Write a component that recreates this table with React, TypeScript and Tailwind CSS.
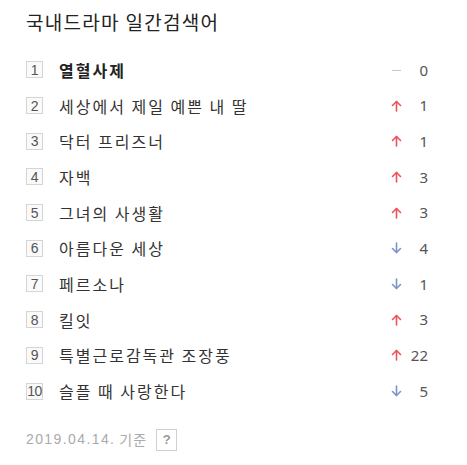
import React from "react";

type Item = { rank: number; title: string; dir: "same" | "up" | "down"; n: number; bold?: boolean };

const items: Item[] = [
  { rank: 1, title: "열혈사제", dir: "same", n: 0, bold: true },
  { rank: 2, title: "세상에서 제일 예쁜 내 딸", dir: "up", n: 1 },
  { rank: 3, title: "닥터 프리즈너", dir: "up", n: 1 },
  { rank: 4, title: "자백", dir: "up", n: 3 },
  { rank: 5, title: "그녀의 사생활", dir: "up", n: 3 },
  { rank: 6, title: "아름다운 세상", dir: "down", n: 4 },
  { rank: 7, title: "페르소나", dir: "down", n: 1 },
  { rank: 8, title: "킬잇", dir: "up", n: 3 },
  { rank: 9, title: "특별근로감독관 조장풍", dir: "up", n: 22 },
  { rank: 10, title: "슬플 때 사랑한다", dir: "down", n: 5 },
];

function Arrow({ dir }: { dir: Item["dir"] }) {
  if (dir === "same") {
    return (
      <svg width="11" height="12" viewBox="0 0 11 12">
        <line x1="1" y1="6.5" x2="10" y2="6.5" stroke="#c8c8c8" strokeWidth="1" />
      </svg>
    );
  }
  const color = dir === "up" ? "#f0505a" : "#7b93c7";
  return (
    <svg width="11" height="12" viewBox="0 0 11 12">
      {dir === "up" ? (
        <g stroke={color} strokeWidth="1.6" fill="none" strokeLinecap="round" strokeLinejoin="round">
          <line x1="5.5" y1="1.5" x2="5.5" y2="11" />
          <polyline points="1.5,5.5 5.5,1.5 9.5,5.5" />
        </g>
      ) : (
        <g stroke={color} strokeWidth="1.6" fill="none" strokeLinecap="round" strokeLinejoin="round">
          <line x1="5.5" y1="1" x2="5.5" y2="10.5" />
          <polyline points="1.5,6.5 5.5,10.5 9.5,6.5" />
        </g>
      )}
    </svg>
  );
}

export default function App() {
  return (
    <div
      className="w-[467px] h-[465px] bg-white pl-[26px] pt-[9px]"
      style={{ fontFamily: '"Noto Sans CJK KR", "Noto Sans", sans-serif' }}
    >
      <h1 className="text-[19px] leading-[26px] text-[#222] font-normal tracking-[1.3px]">국내드라마 일간검색어</h1>
      <ul className="mt-[17px] w-[402px] flex flex-col">
        {items.map((it) => (
          <li key={it.rank} className="h-[35.7px] flex items-center">
            <span
              className="w-[17px] h-[17px] border border-[#d5d5d5] bg-[#fafafa] flex items-center justify-center text-[14px] leading-none text-[#555] tracking-[-0.5px]"
              style={{ fontFamily: '"Liberation Sans", Arial, sans-serif' }}
            >
              {it.rank}
            </span>
            <span
              className={`ml-[16px] flex-1 text-[16px] tracking-[2px] ${it.bold ? "font-bold text-[#222]" : "text-[#333]"}`}
            >
              {it.title}
            </span>
            <span className="flex items-center">
              <Arrow dir={it.dir} />
            </span>
            <span
              className="w-[26px] text-right text-[15px] text-[#555]"
              style={{ fontFamily: '"Noto Sans", sans-serif' }}
            >
              {it.n}
            </span>
          </li>
        ))}
      </ul>
      <div className="mt-[20px] flex items-center text-[#aaa] text-[14px]">
        <span className="tracking-[1.4px]" style={{ fontFamily: '"Liberation Sans", Arial, "Noto Sans CJK KR", sans-serif' }}>2019.04.14.</span>
        <span className="ml-[4px] tracking-[1px]">기준</span>
        <span
          className="ml-[9px] w-[21px] h-[22px] border border-[#d0d0d0] flex items-center justify-center text-[13px] font-bold text-[#999]"
          style={{ fontFamily: '"Liberation Sans", Arial, sans-serif' }}
        >
          ?
        </span>
      </div>
    </div>
  );
}
